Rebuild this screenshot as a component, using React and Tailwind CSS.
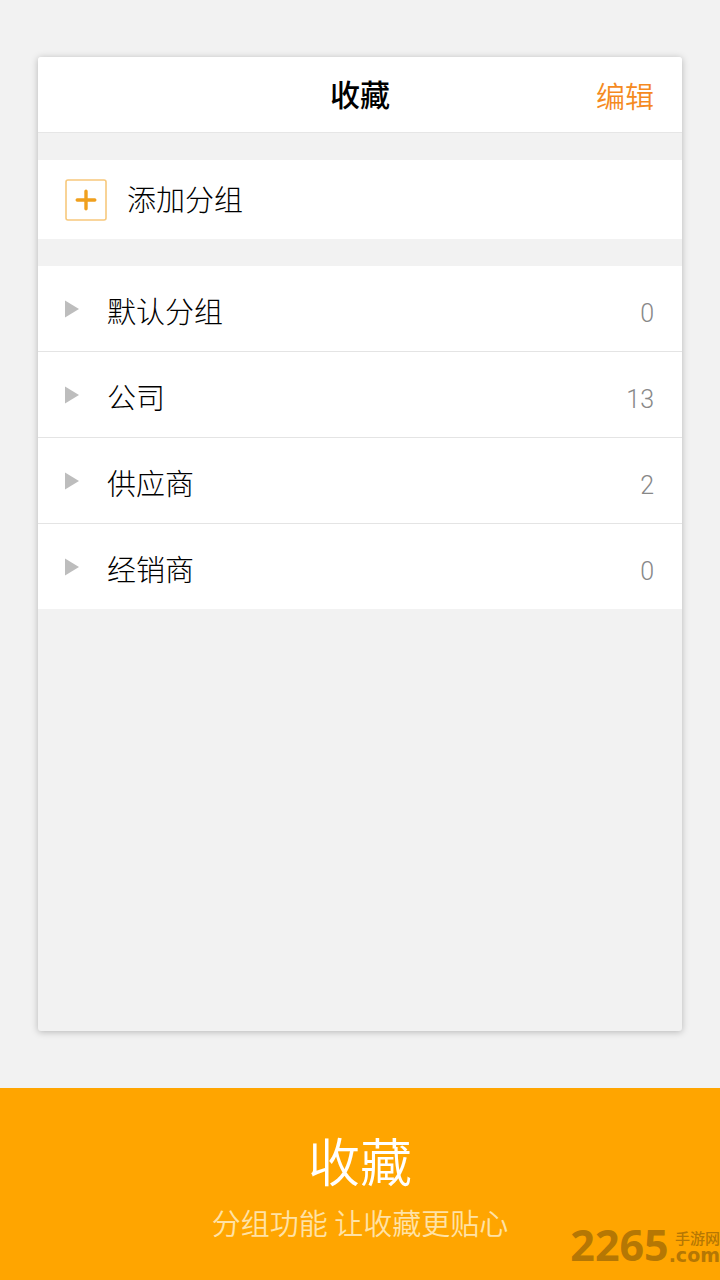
const groups = [
  { name: '默认分组', count: 0 },
  { name: '公司', count: 13 },
  { name: '供应商', count: 2 },
  { name: '经销商', count: 0 },
];

function PlusBox() {
  return (
    <svg className="h-[42px] w-[42px] shrink-0" viewBox="0 0 42 42" fill="none" aria-hidden="true">
      <rect x="1" y="1" width="40" height="40" rx="2" stroke="#f7c87c" strokeWidth="1.6" />
      <path d="M21 12.2v17.6M12.2 21h17.6" stroke="#f0a01e" strokeWidth="3.4" strokeLinecap="round" />
    </svg>
  );
}

function GroupRow({ name, count }) {
  return (
    <li className="border-b border-[#e4e4e4] last:border-b-0">
      <button type="button" className="flex h-[85px] w-full items-center bg-white pl-[27px] pr-7 pt-0.5 text-left">
        <svg className="mb-0.5 h-[18px] w-[14px] shrink-0" viewBox="0 0 14 18" aria-hidden="true">
          <path d="M0 0.5 14 9 0 17.5z" fill="#bdbdbd" />
        </svg>
        <span className="ml-7 flex-1 font-light text-black">{name}</span>
        <span className="mt-2 font-['Roboto',sans-serif] text-[25px] font-light text-[#888]">{count}</span>
      </button>
    </li>
  );
}

function Watermark() {
  return (
    <div className="absolute bottom-3.5 right-0 flex items-end text-[#b57704]" aria-hidden="true">
      <span className="font-['Open_Sans',sans-serif] text-[43px] font-bold leading-[42px]">2265</span>
      <span className="flex flex-col items-end pb-0.5">
        <span className="text-[15px] font-medium leading-4">手游网</span>
        <span className="font-['DejaVu_Sans',sans-serif] text-[19px] font-bold leading-[18px]">.com</span>
      </span>
    </div>
  );
}

export default function App() {
  return (
    <div className="flex min-h-screen flex-col bg-[#f2f2f2] font-['Noto_Sans_CJK_SC',sans-serif] text-[29px] font-[350] leading-10">
      <main className="mx-[38px] my-[57px] flex flex-1 flex-col overflow-hidden rounded-[3px] bg-[#f2f2f2] shadow-[0_1px_7px_rgba(0,0,0,0.25)]">
        <header className="grid h-[76px] grid-cols-[1fr_auto_1fr] items-center border-b border-[#e6e6e6] bg-white px-7">
          <h1 className="col-start-2 pb-1 text-[30px] font-medium text-black">收藏</h1>
          <button type="button" className="justify-self-end text-[#f58a1f]">编辑</button>
        </header>

        <button type="button" className="mt-[27px] flex h-[79px] items-center gap-5 bg-white px-[27px] text-left">
          <PlusBox />
          <span className="pb-1 font-light text-black">添加分组</span>
        </button>

        <ul className="mt-[27px]">
          {groups.map((group) => (
            <GroupRow key={group.name} name={group.name} count={group.count} />
          ))}
        </ul>
      </main>

      <footer className="relative flex h-48 flex-col items-center bg-[#ffa500] pt-10 text-center">
        <h2 className="text-[52px] leading-[64px] text-white">收藏</h2>
        <p className="mt-2.5 text-[#ffe2a6]">分组功能 让收藏更贴心</p>
        <Watermark />
      </footer>
    </div>
  );
}
